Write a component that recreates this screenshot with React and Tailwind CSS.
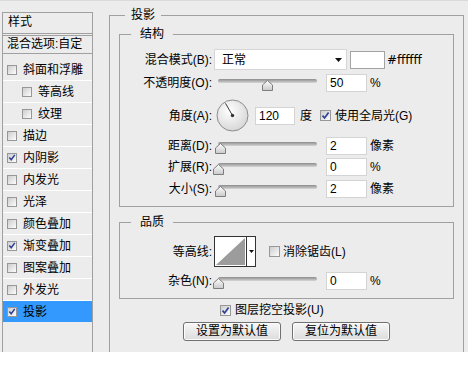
import React from 'react';

function Check({ on, small }) {
  return (
    <span
      className={
        'inline-flex shrink-0 items-center justify-center border border-[#979797] bg-linear-to-br from-[#cdcdcd] to-[#fdfdfd] ' +
        (small ? 'w-[10px] h-[10px]' : 'w-[11px] h-[11px]')
      }
    >
      {on && (
        <svg width="9" height="9" viewBox="0 0 9 9">
          <path d="M1.5 4.6 L3.6 7 L7.6 1.6" fill="none" stroke="#2d3f95" strokeWidth="1.7" />
        </svg>
      )}
    </span>
  );
}

function Label({ children }) {
  return <div className="w-[94px] shrink-0 pr-[2px] text-right whitespace-nowrap">{children}</div>;
}

function Field({ value, wide }) {
  return (
    <div
      className={
        'h-[18px] shrink-0 bg-white border border-[#d4d4d4] pl-[3px] leading-[16px] ' +
        (wide ? 'w-[41px]' : 'w-[40px]')
      }
    >
      {value}
    </div>
  );
}

function Thumb() {
  return (
    <svg width="11" height="11" viewBox="0 0 11 11">
      <defs>
        <linearGradient id="thumbGrad" x1="0" y1="0" x2="0" y2="1">
          <stop offset="0" stopColor="#ffffff" />
          <stop offset="1" stopColor="#c9c9c9" />
        </linearGradient>
      </defs>
      <path d="M5.5 0.5 L10.5 5 V10.5 H0.5 V5 Z" fill="url(#thumbGrad)" stroke="#7d7d7d" />
    </svg>
  );
}

function Slider({ pos }) {
  return (
    <div className="relative ml-[4px] w-[99px] h-[20px] shrink-0">
      <div className="mt-[6px] h-[4px] rounded-full bg-linear-to-b from-[#8c8c8c] to-[#d6d6d6]" />
      <div className={'absolute top-[7px] flex ' + pos}>
        <Thumb />
      </div>
    </div>
  );
}

function SliderRow({ label, pos, value, unit, mt }) {
  return (
    <div className={'flex items-center h-[20px] ' + mt}>
      <Label>{label}</Label>
      <Slider pos={pos} />
      <div className="ml-[9px]">
        <Field value={value} wide />
      </div>
      <span className="ml-[3px]">{unit}</span>
    </div>
  );
}

function Legend({ children, outer }) {
  return (
    <div
      className={
        '-mt-[9px] w-fit h-[16px] leading-[16px] bg-[#ececec] ' +
        (outer ? 'ml-[15px] px-[6px]' : 'ml-[11px] px-[9px]')
      }
    >
      {children}
    </div>
  );
}

function Dial() {
  return (
    <svg width="33" height="33" viewBox="0 0 33 33" className="ml-[2px] shrink-0">
      <defs>
        <radialGradient id="dialGrad" cx="40%" cy="35%" r="75%">
          <stop offset="0" stopColor="#ffffff" />
          <stop offset="1" stopColor="#d2d2d2" />
        </radialGradient>
      </defs>
      <circle cx="16.5" cy="16.5" r="15.5" fill="url(#dialGrad)" stroke="#8c8c8c" />
      <line x1="16.5" y1="16.5" x2="9.5" y2="4.3" stroke="#3a3a3a" strokeWidth="1" />
      <circle cx="16.5" cy="16.5" r="1.7" fill="#333333" />
    </svg>
  );
}

const items = [
  { name: '等高线', sub: true },
  { name: '纹理', sub: true },
  { name: '描边' },
  { name: '内阴影', on: true },
  { name: '内发光' },
  { name: '光泽' },
  { name: '颜色叠加' },
  { name: '渐变叠加', on: true },
  { name: '图案叠加' },
  { name: '外发光' },
];

function StyleList() {
  return (
    <div className="ml-[2px] mt-[11px] w-[91px] h-[400px] shrink-0 border-x border-t border-[#a0a0a0]">
      <div className="h-[21px] pl-[5px] leading-[18px] border-b border-[#a0a0a0]">样式</div>
      <div className="mt-[1px] h-[1px] bg-[#a0a0a0]" />
      <div className="h-[18px] pl-[4px] leading-[16px] whitespace-nowrap overflow-hidden border-b border-[#a0a0a0]">
        混合选项:自定
      </div>
      <div className="h-[27px] pt-[6px] pl-[4px] flex items-center border-b border-white">
        <Check small />
        <span className="ml-[6px] whitespace-nowrap">斜面和浮雕</span>
      </div>
      {items.map((it) => (
        <div
          key={it.name}
          className={
            'h-[22px] flex items-center border-b border-white ' + (it.sub ? 'pl-[19px]' : 'pl-[4px]')
          }
        >
          <Check small on={it.on} />
          <span className="ml-[6px] whitespace-nowrap">{it.name}</span>
        </div>
      ))}
      <div className="h-[21px] pl-[4px] flex items-center bg-[#3399ff]">
        <Check small on />
        <span className="ml-[6px]">投影</span>
      </div>
    </div>
  );
}

function Button({ children }) {
  return (
    <div className="w-[98px] h-[19px] rounded-[3px] border border-[#707070] bg-linear-to-b from-[#f7f7f7] to-[#dcdcdc] text-center leading-[17px] shadow-[inset_0_0_0_1px_#fcfcfc]">
      {children}
    </div>
  );
}

function DropShadow() {
  return (
    <div className="ml-[16px] mt-[14px] w-[355px] h-[400px] shrink-0 border-x border-t border-[#a0a0a0]">
      <Legend outer>投影</Legend>

      <div className="mt-[11px] ml-[9px] w-[335px] border border-[#a0a0a0] pb-[7px]">
        <Legend>结构</Legend>

        <div className="mt-[7px] flex items-center h-[21px]">
          <Label>混合模式(B):</Label>
          <div className="w-[133px] h-[21px] shrink-0 bg-white border border-[#d6d6d6] flex items-center justify-between pl-[7px] pr-[4px]">
            <span>正常</span>
            <svg width="7" height="4" viewBox="0 0 7 4">
              <path d="M0 0 H7 L3.5 4 Z" fill="#111" />
            </svg>
          </div>
          <div className="ml-[3px] w-[35px] h-[18px] shrink-0 bg-white border border-[#a3a3a3]" />
          <span className="ml-[2px] font-['DejaVu_Sans',sans-serif]">#ffffff</span>
        </div>

        <SliderRow label="不透明度(O):" pos="left-[44px]" value="50" unit="%" mt="mt-[3px]" />

        <div className="mt-[6px] flex items-center h-[33px]">
          <Label>角度(A):</Label>
          <Dial />
          <div className="ml-[6px]">
            <Field value="120" />
          </div>
          <span className="ml-[5px]">度</span>
          <div className="ml-[8px] flex items-center">
            <Check on />
          </div>
          <span className="ml-[4px] whitespace-nowrap">使用全局光(G)</span>
        </div>

        <SliderRow label="距离(D):" pos="-left-[3px]" value="2" unit="像素" mt="mt-[4px]" />
        <SliderRow label="扩展(R):" pos="-left-[5px]" value="0" unit="%" mt="mt-[1px]" />
        <SliderRow label="大小(S):" pos="-left-[3px]" value="2" unit="像素" mt="mt-[2px]" />
      </div>

      <div className="mt-[15px] ml-[9px] w-[335px] border border-[#a0a0a0] pb-[7px]">
        <Legend>品质</Legend>

        <div className="mt-[6px] flex items-center h-[31px]">
          <Label>等高线:</Label>
          <div className="flex w-[42px] h-[31px] shrink-0 border border-[#333333] bg-white">
            <div className="w-[32px] h-full border-r border-[#333333] p-[1px]">
              <svg width="29" height="27" viewBox="0 0 29 27" className="block">
                <polygon points="0,27 29,0 29,27" fill="#9c9c9c" />
              </svg>
            </div>
            <div className="flex-1 flex items-center justify-center">
              <svg width="5" height="3" viewBox="0 0 5 3">
                <path d="M0 0 H5 L2.5 3 Z" fill="#111" />
              </svg>
            </div>
          </div>
          <div className="ml-[13px] flex items-center">
            <Check />
          </div>
          <span className="ml-[3px] whitespace-nowrap">消除锯齿(L)</span>
        </div>

        <SliderRow label="杂色(N):" pos="-left-[5px]" value="0" unit="%" mt="mt-[4px]" />
      </div>

      <div className="mt-[2px] h-[18px] pl-[110px] flex items-center">
        <Check on />
        <span className="ml-[4px] whitespace-nowrap">图层挖空投影(U)</span>
      </div>

      <div className="mt-[3px] flex justify-center gap-[11px]">
        <Button>设置为默认值</Button>
        <Button>复位为默认值</Button>
      </div>
    </div>
  );
}

export default function App() {
  return (
    <div className="w-[468px] h-[366px] bg-white font-['Liberation_Sans','Noto_Sans_CJK_SC',sans-serif] text-[12px] text-black">
      <div className="h-[352px] bg-[#ececec] border-t border-[#dadada] flex items-start overflow-hidden">
        <StyleList />
        <DropShadow />
      </div>
    </div>
  );
}
